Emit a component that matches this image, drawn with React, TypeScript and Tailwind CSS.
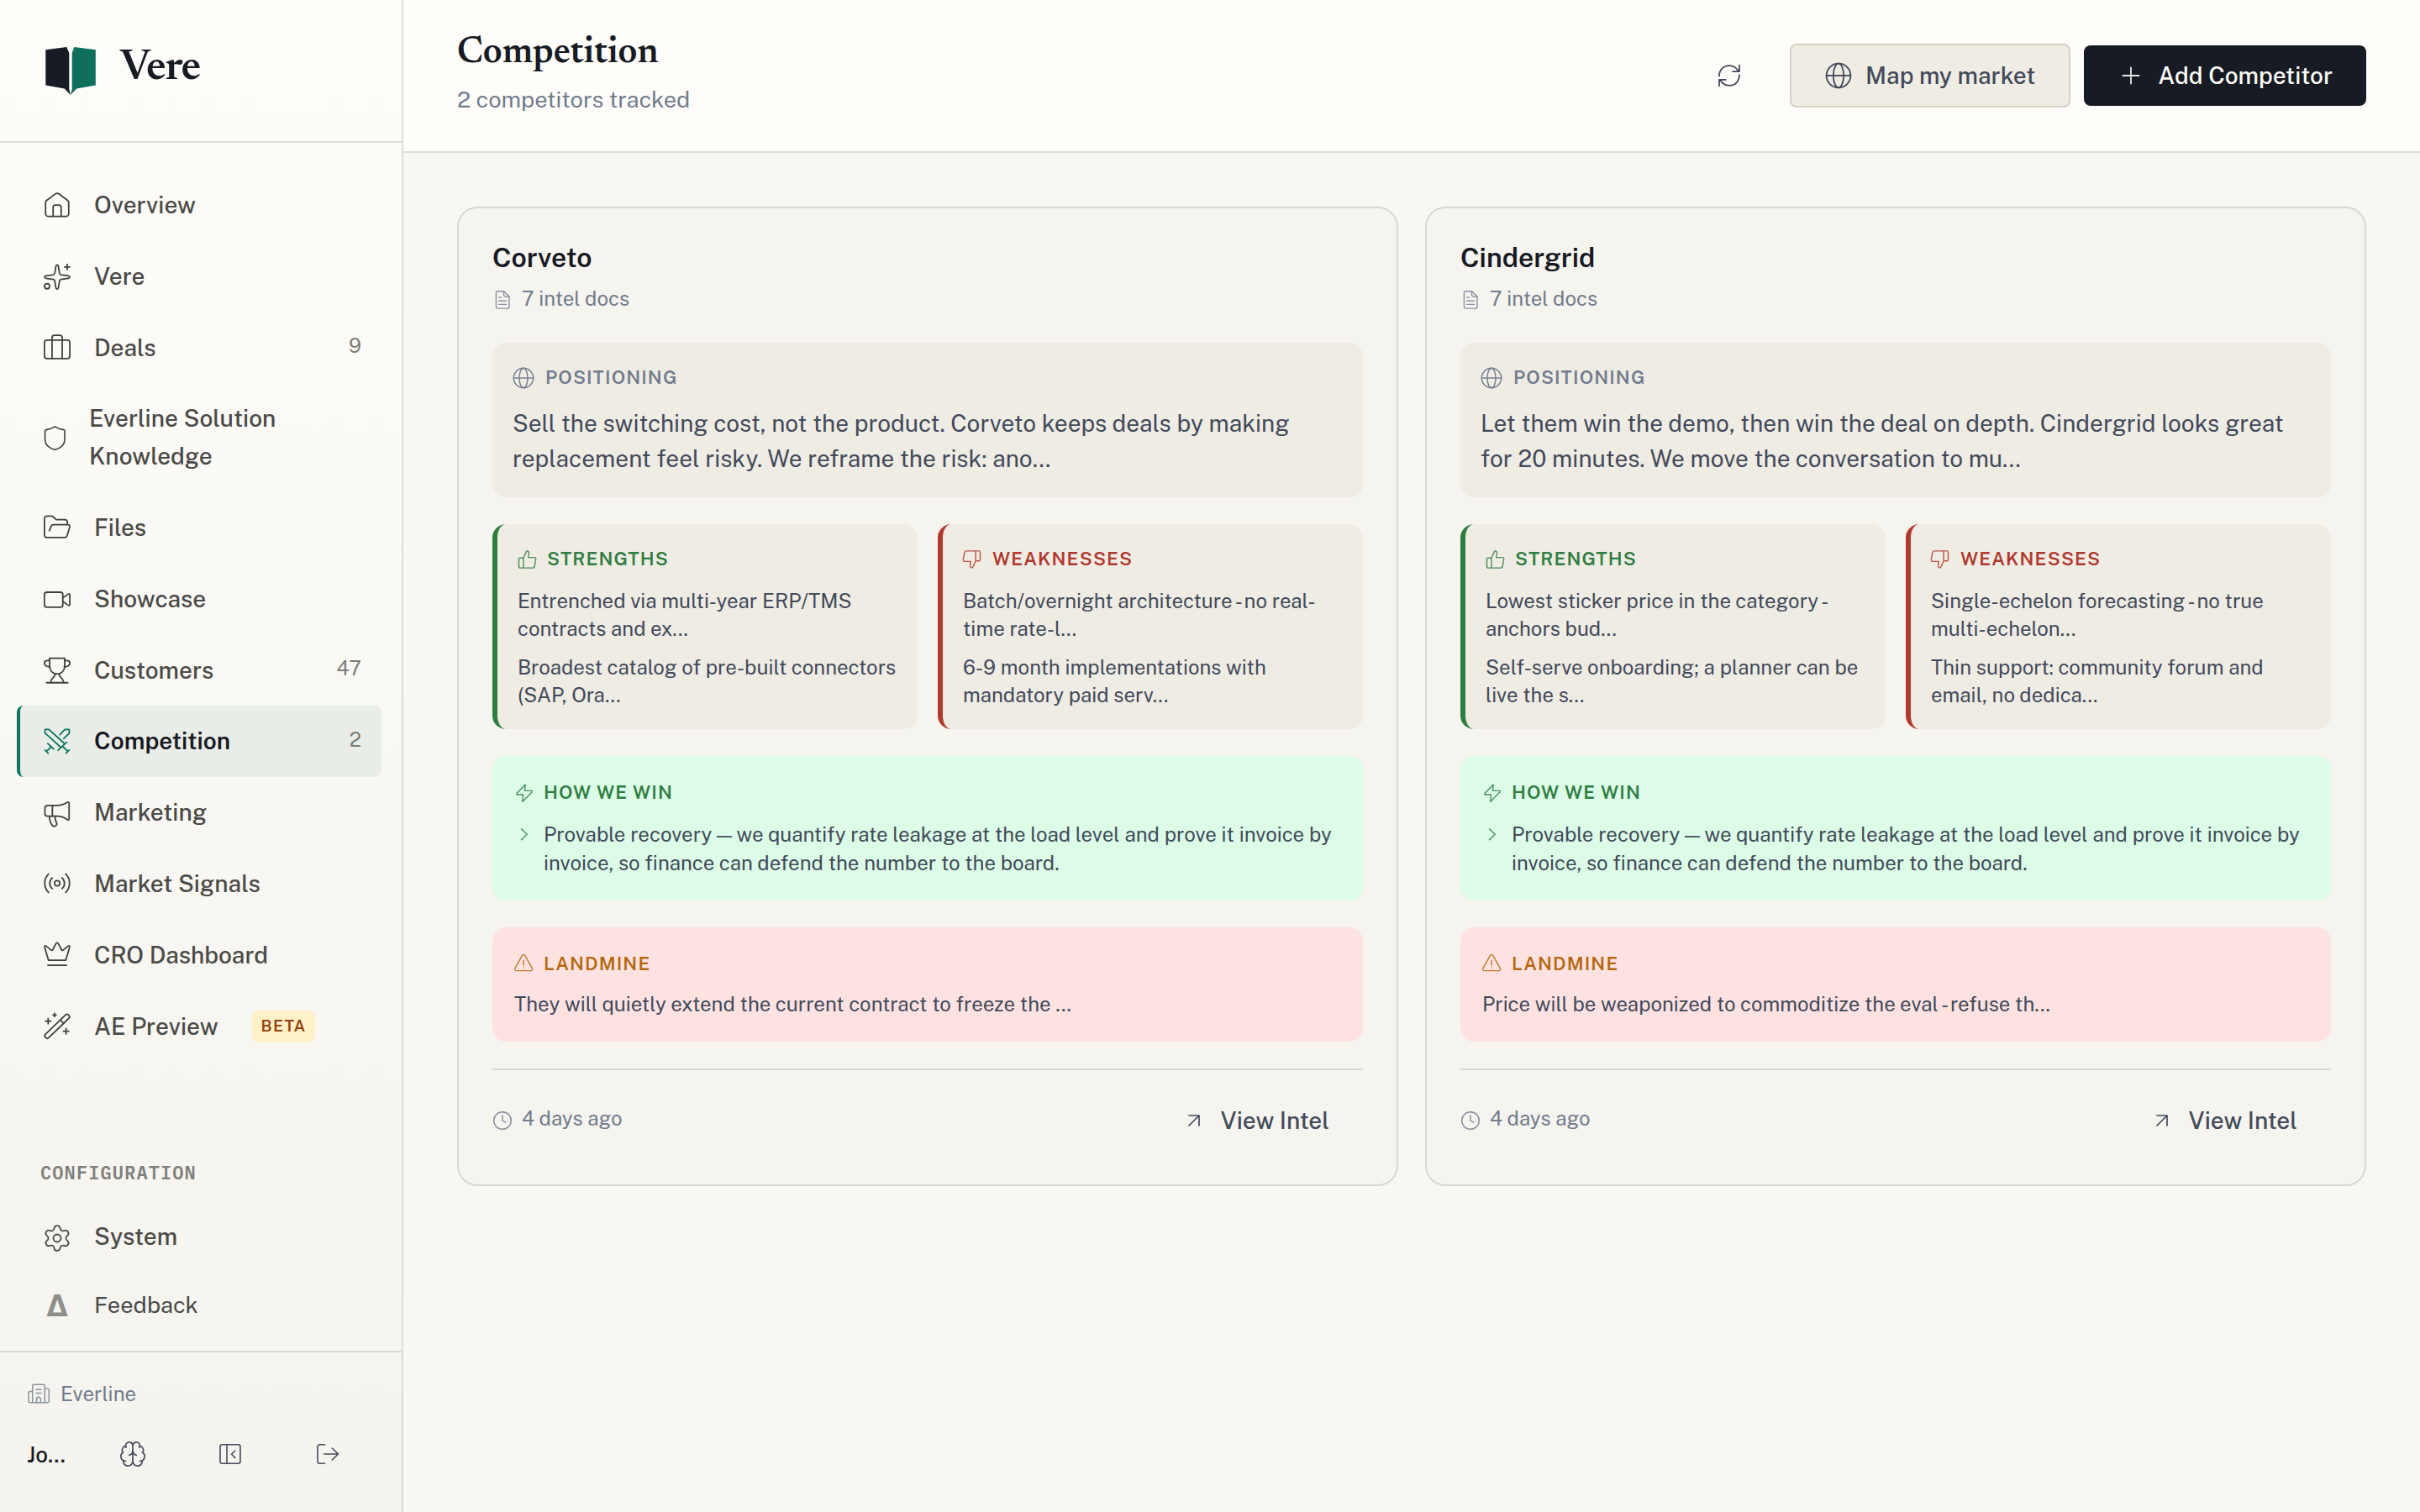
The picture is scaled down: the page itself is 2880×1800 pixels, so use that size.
import React from "react";
import type { ReactNode } from "react";
import { Brain, Settings } from "lucide-react";

/* ---------- icon helpers ---------- */

function Icon18({ children }: { children: ReactNode }) {
  return (
    <svg
      viewBox="0 0 18 18"
      className="h-8 w-8 shrink-0 overflow-visible"
      fill="none"
      stroke="currentColor"
      strokeWidth={1}
      strokeLinecap="round"
      strokeLinejoin="round"
    >
      {children}
    </svg>
  );
}

function Px({ w, h, sw = 1.6, className = "", children }: { w: number; h: number; sw?: number; className?: string; children: ReactNode }) {
  return (
    <svg
      viewBox={`0 0 ${w} ${h}`}
      width={w}
      height={h}
      className={`shrink-0 overflow-visible ${className}`}
      fill="none"
      stroke="currentColor"
      strokeWidth={sw}
      strokeLinecap="round"
      strokeLinejoin="round"
    >
      {children}
    </svg>
  );
}

const HomeIcon = () => (
  <Icon18>
    <path d="M1.25 7.5c0-.7.3-1.2.8-1.6l5.8-4.3c.7-.5 1.6-.5 2.3 0l5.8 4.3c.5.4.8.9.8 1.6v7.2a2 2 0 0 1-2 2H3.25a2 2 0 0 1-2-2z" />
    <path d="M6.3 16.7v-6.1c0-.9.6-1.5 1.5-1.5h2.4c.9 0 1.5.6 1.5 1.5v6.1" />
  </Icon18>
);
const SparkleIcon = () => (
  <Icon18>
    <path d="M8.2 2.1c.2-1 1.4-1 1.6 0l.8 4.9c.1.5.4.8.9.9l5 .7c1.2.2 1.2 1.5 0 1.7l-5 .8c-.5.1-.8.4-.9.9l-.8 4.8c-.2 1-1.4 1-1.6 0l-.8-4.8c-.1-.5-.4-.8-.9-.9l-5-.8c-1.2-.2-1.2-1.5 0-1.7l5-.7c.5-.1.8-.4.9-.9z" />
    <path d="M15.75.9v3.6M13.95 2.7h3.6" />
    <circle cx="2.25" cy="15.6" r="1.7" />
  </Icon18>
);
const DealsIcon = () => (
  <Icon18>
    <rect x=".5" y="3.9" width="17" height="12.3" rx="1.7" />
    <path d="M5.6 16.2V2.2A1.6 1.6 0 0 1 7.2.6h3.6a1.6 1.6 0 0 1 1.6 1.6v14" />
  </Icon18>
);
const ShieldIcon = () => (
  <Px w={26} h={32} sw={1.6}>
    <path d="M13.3 2.9C10 5.2 6.5 6 3 6.6c-.9.2-1.4.8-1.4 1.6v10.2c0 6.6 5.5 10.2 11.7 12.1 6.2-1.9 11.7-5.5 11.7-12.1V8.2c0-.8-.5-1.4-1.4-1.6-3.5-.6-7-1.4-10.3-3.7z" />
  </Px>
);
const FolderIcon = () => (
  <Icon18>
    <path d="M3.8 11.2l1-2.8c.3-.8 1-1.3 1.8-1.3h9.6c.9 0 1.5.8 1.2 1.7l-1.7 5.6c-.2.8-.9 1.3-1.8 1.3H2.2c-.9 0-1.7-.8-1.7-1.7V3.2c0-1.1.8-1.9 1.9-1.9h2.7c.6 0 1 .2 1.4.6l1.3 1.4c.3.3.6.4 1 .4h5.4c.9 0 1.7.8 1.7 1.7v1.7" />
  </Icon18>
);
const VideoIcon = () => (
  <Icon18>
    <rect x=".5" y="4.5" width="12.3" height="10" rx="1.6" />
    <path d="M12.8 8.3l3.7-2.6c.4-.3 1 0 1 .6v6.4c0 .6-.6.9-1 .6l-3.7-2.6" />
  </Icon18>
);
const TrophyIcon = () => (
  <Icon18>
    <path d="M3.9 .9h10.2l-.1 5.7a5 4.9 0 0 1-10 0z" />
    <path d="M4 2.5H2.4C1.2 2.5.5 3.1.5 4.1c0 1.8 1.5 2.6 3.7 2.5M14 2.5h1.6c1.2 0 1.9.6 1.9 1.6 0 1.8-1.5 2.6-3.7 2.5" />
    <path d="M7.6 11.4c.4 2.4-3 2.5-3 5.9M10.4 11.4c-.4 2.4 3 2.5 3 5.9M1.9 17.3h14.2" />
  </Icon18>
);
const SwordsIcon = () => (
  <Icon18>
    <path d="M11.5 12.8L.9 3.2V.8h2.6l10.6 9.6M15.4 9.4l-5.8 5.3M12.6 12.1l3.5 3.3M17.1 14.6L15 16.7" />
    <path d="M10.8 4.3L14.2.8h2.9v2.5l-3.7 3.6M2.7 10.2l4 3.7M5.2 12.3l-3.3 3.1M.9 14.6L3 16.7" />
  </Icon18>
);
const MegaphoneIcon = () => (
  <Icon18>
    <path d="M2.6 3.9h6c3.4 0 5.6-1 7.3-2.2.5-.3 1.1 0 1.1.6v10.6c0 .6-.6.9-1.1.6-1.7-1.4-3.9-2.4-7.3-2.4h-6A1.8 1.8 0 0 1 .8 9.3V5.7c0-1 .8-1.8 1.8-1.8z" />
    <path d="M5.8 3.9v7.2M3.8 11.1c.1 2.8.8 4.8 2 6.1.6.7 1.5.8 2.2.3.8-.6 1-1.5.5-2.3-.7-1.2-1-2.3-1-4.1" />
  </Icon18>
);
const SignalIcon = () => (
  <Icon18>
    <circle cx="9" cy="8.7" r="1.75" />
    <path d="M5.7 5.1a4.8 4.8 0 0 0 0 7.2M12.3 5.1a4.8 4.8 0 0 1 0 7.2M3.3 2.5a8.7 8.7 0 0 0 0 12.4M14.7 2.5a8.7 8.7 0 0 1 0 12.4" />
  </Icon18>
);
const CrownIcon = () => (
  <Icon18>
    <path d="M3.2 12.4L.6 3.7c-.2-.8.5-1.2 1.1-.7l3.3 2.7c.4.3.8.2 1-.2L8.3 1.2c.3-.6 1.1-.6 1.4 0L12 5.5c.2.4.6.5 1 .2l3.3-2.7c.6-.5 1.3-.1 1.1.7l-2.6 8.7zM2.8 15.8h12.4" />
  </Icon18>
);
const WandIcon = () => (
  <Icon18>
    <g transform="translate(9 8.9) rotate(-44)">
      <rect x="-10.7" y="-1.6" width="21.4" height="3.2" rx="1.3" />
      <path d="M4.5-1.6v3.2" />
    </g>
    <path d="M7.3.2v2.2M6.2 1.3h2.2M3 3.6v3.6M1.2 5.4h3.6M15 10.4V14M13.2 12.2h3.6" />
  </Icon18>
);
const Globe = ({ size, sw }: { size: number; sw: number }) => (
  <svg viewBox="0 0 26 26" width={size} height={size} className="shrink-0" fill="none" stroke="currentColor" strokeWidth={sw}>
    <circle cx="13" cy="13" r="11.7" />
    <ellipse cx="13" cy="13" rx="5" ry="11.7" />
    <path d="M1.3 13h23.4" />
  </svg>
);
const FileIcon = () => (
  <Px w={24} h={24} sw={1.4} className="opacity-80">
    <path d="M13.6 1.7H6.6a2.2 2.2 0 0 0-2.2 2.2v16a2.2 2.2 0 0 0 2.2 2.2h11.2a2.2 2.2 0 0 0 2.2-2.2V8z" />
    <path d="M13.6 1.7V6.6A1.4 1.4 0 0 0 15 8h5M7.7 9h2.6M7.7 13.2h8.8M7.7 17.4h8.8" />
  </Px>
);
const ClockIcon = () => (
  <Px w={24} h={24} sw={1.4} className="opacity-85">
    <circle cx="12" cy="12" r="10.3" />
    <path d="M12 5.5V12l4 2.5" />
  </Px>
);
const ThumbUp = ({ flip = false }: { flip?: boolean }) => (
  <Px w={22} h={22} sw={1.4} className={flip ? "rotate-180 opacity-85" : "opacity-85"}>
    <path d="M6.9 9.2L10.3 1.9c.5-1 1.9-1.2 2.7-.3.6.7.7 1.4.5 2.3l-.9 4.7h7.2c1.2 0 2.1 1 1.9 2.2l-1.6 8.6c-.2 1-.9 1.7-2 1.7H3c-.9 0-1.5-.6-1.5-1.5v-8.9c0-.9.6-1.5 1.5-1.5zM6.9 9.2v11.9" />
  </Px>
);
const ZapIcon = () => (
  <Px w={22} h={22} sw={1.4} className="opacity-85">
    <path d="M13.2.9L2.9 11.6c-.5.6-.2 1.4.6 1.4h7.2l-.9 8.4L21.1 9.8c.5-.6.2-1.4-.6-1.4h-8.2z" />
  </Px>
);
const WarnIcon = () => (
  <Px w={22} h={22} sw={1.4} className="opacity-85">
    <path d="M9.4.6c.8-1.3 2.6-1.3 3.4 0l8.5 15.1c.8 1.3-.1 2.9-1.7 2.9H2.6C1 18.6.1 17 .9 15.7zM11.1 6.2v6M11.1 15v.3" />
  </Px>
);
const ChevronIcon = () => (
  <Px w={22} h={22} sw={1.4} className="opacity-85">
    <path d="M8.5 4.7l6.7 6.5-6.7 6.5" />
  </Px>
);

/* ---------- sidebar ---------- */

type NavEntry = { label: string; icon: ReactNode; count?: string; active?: boolean; beta?: boolean };

const NAV: NavEntry[] = [
  { label: "Overview", icon: <HomeIcon /> },
  { label: "Vere", icon: <SparkleIcon /> },
  { label: "Deals", icon: <DealsIcon />, count: "9" },
  { label: "Everline Solution Knowledge", icon: <ShieldIcon /> },
  { label: "Files", icon: <FolderIcon /> },
  { label: "Showcase", icon: <VideoIcon /> },
  { label: "Customers", icon: <TrophyIcon />, count: "47" },
  { label: "Competition", icon: <SwordsIcon />, count: "2", active: true },
  { label: "Marketing", icon: <MegaphoneIcon /> },
  { label: "Market Signals", icon: <SignalIcon /> },
  { label: "CRO Dashboard", icon: <CrownIcon /> },
  { label: "AE Preview", icon: <WandIcon />, beta: true },
];

function NavItem({ item }: { item: NavEntry }) {
  return (
    <a
      className={`flex items-center gap-7 rounded-lg border-l-4 py-5 pr-6 pl-7 text-[28px] leading-[44.8px] ${
        item.active ? "border-[#0d7560] bg-[#e8ede7] font-semibold text-[#171923]" : "border-transparent font-medium text-[#4a4a47]"
      }`}
    >
      <span className={item.active ? "text-[#0d7560]" : "text-[#3f3f3d]"}>{item.icon}</span>
      <span>{item.label}</span>
      {item.beta && (
        <span className="ml-3 flex h-[38px] items-center rounded-lg bg-[#fef0c7] px-[11px] text-[19.2px] leading-none font-semibold tracking-[1.1px] text-[#92400e]">
          BETA
        </span>
      )}
      {item.count && <span className="ml-auto pb-1.5 text-[24px] leading-[38.4px] font-normal text-[#7c7c79]">{item.count}</span>}
    </a>
  );
}

function Sidebar() {
  return (
    <aside className="flex w-[480px] shrink-0 flex-col border-r-2 border-[#dcdbd8] bg-linear-to-b from-[#fefdf9] to-[#f4f3ee]">
      <div className="flex h-[170px] shrink-0 items-center gap-[29px] border-b-2 border-[#dcdcda] pl-[54px]">
        <svg viewBox="0 0 60 57" width={60} height={57} className="shrink-0">
          <path d="M.3 3.3L25.3 0l3 7v43L30 57l-7.3-7.4L.3 45.6z" fill="#171b23" />
          <path d="M59.8 3.3L34.3 0l-2.6 7v43L30 57l7.3-7.4 22.5-4z" fill="#0f6f5b" />
        </svg>
        <span className="pb-1 font-['Newsreader','Liberation_Serif',serif] text-[52px] leading-none font-semibold tracking-[-1.3px] text-[#171b23]">Vere</span>
      </div>

      <nav className="flex flex-col pt-8 pr-6 pl-5">
        {NAV.map((n) => (
          <NavItem key={n.label} item={n} />
        ))}
      </nav>

      <div className="mt-auto flex flex-col pr-6 pb-3 pl-5">
        <div className="pb-[22px] pl-7 font-['IBM_Plex_Mono','Liberation_Mono',monospace] text-[22px] leading-[30px] font-semibold tracking-[1.1px] text-[#7f7f7a]">
          CONFIGURATION
        </div>
        <a className="flex h-[78px] items-center gap-7 pl-8 text-[28px] font-medium text-[#4a4a47]">
          <Settings size={36} strokeWidth={1.2} className="-m-0.5 translate-y-0.5" />
          System
        </a>
        <a className="flex h-[85px] items-center gap-7 pl-8 text-[27.2px] text-[#4a4a47]">
          <span className="w-8 text-center font-['Inter',sans-serif] text-[36px] font-bold text-[#8e8e8a]">Δ</span>
          Feedback
        </a>
      </div>

      <div className="flex h-[192px] shrink-0 flex-col border-t-2 border-[#dad9d5] px-8 pt-[29px]">
        <div className="flex h-[39px] items-center gap-[13px] pl-px text-[24px] text-[#717c8d]">
          <Px w={26} h={24} sw={1.5} className="opacity-80">
            <path d="M5.7 22.7V3.3A2 2 0 0 1 7.7 1.3h10.6a2 2 0 0 1 2 2v19.4M5.7 9.5H3a2 2 0 0 0-2 2v9.2a2 2 0 0 0 2 2h20.3a2 2 0 0 0 2-2V8.3a2 2 0 0 0-2-2h-3" />
            <path d="M10 7.3h6M10 11.5h6M10.5 22.7v-4a2.5 2.5 0 0 1 5 0v4" />
          </Px>
          Everline
        </div>
        <div className="mt-[11px] flex h-[84px] items-center text-[#454c5c]">
          <span className="w-[68px] shrink-0 text-[26px] font-medium text-[#171923]">Jo...</span>
          <span className="flex w-[116px] shrink-0 justify-center">
            <Brain size={34} strokeWidth={1.2} />
          </span>
          <span className="flex w-[116px] shrink-0 justify-center">
            <Px w={26} h={26}>
              <rect x="1" y="1.8" width="24" height="22.5" rx="2.5" />
              <path d="M9 1.8v22.5M18.8 9L14.5 13.2l4.3 4.2" />
            </Px>
          </span>
          <span className="flex w-[116px] shrink-0 justify-center">
            <Px w={26} h={26}>
              <path d="M9.6 1.8H3.5A2.5 2.5 0 0 0 1 4.3v17.5a2.5 2.5 0 0 0 2.5 2.5h6.1M8.7 13h16.8M18.2 6l7.3 7-7.3 7" />
            </Px>
          </span>
        </div>
      </div>
    </aside>
  );
}

/* ---------- competitor cards ---------- */

type Competitor = { name: string; positioning: string; strengths: string[]; weaknesses: string[]; landmine: string };

const COMPETITORS: Competitor[] = [
  {
    name: "Corveto",
    positioning: "Sell the switching cost, not the product. Corveto keeps deals by making replacement feel risky. We reframe the risk: ano...",
    strengths: ["Entrenched via multi-year ERP/TMS contracts and ex...", "Broadest catalog of pre-built connectors (SAP, Ora..."],
    weaknesses: ["Batch/overnight architecture - no real-time rate-l...", "6-9 month implementations with mandatory paid serv..."],
    landmine: "They will quietly extend the current contract to freeze the ...",
  },
  {
    name: "Cindergrid",
    positioning: "Let them win the demo, then win the deal on depth. Cindergrid looks great for 20 minutes. We move the conversation to mu...",
    strengths: ["Lowest sticker price in the category - anchors bud...", "Self-serve onboarding; a planner can be live the s..."],
    weaknesses: ["Single-echelon forecasting - no true multi-echelon...", "Thin support: community forum and email, no dedica..."],
    landmine: "Price will be weaponized to commoditize the eval - refuse th...",
  },
];

function Label({ icon, color, children }: { icon: ReactNode; color: string; children: ReactNode }) {
  return (
    <div className={`flex items-center gap-[13px] text-[22px] leading-[36px] font-semibold tracking-[1.1px] ${color}`}>
      {icon}
      <span className="-translate-y-px">{children}</span>
    </div>
  );
}

function Points({ items }: { items: string[] }) {
  return (
    <div className="mt-[15px] flex flex-col gap-[13px] text-[24px] leading-[33px]">
      {items.map((t) => (
        <p key={t}>{t}</p>
      ))}
    </div>
  );
}

function Card({ c }: { c: Competitor }) {
  return (
    <article className="flex h-[1166px] flex-col rounded-3xl border-2 border-[#d8d7d2] bg-[#f5f4ef] p-10 text-[#424a5a]">
      <h2 className="text-[32px] leading-[37px] font-semibold text-[#171923]">{c.name}</h2>
      <div className="mt-2.5 flex h-10 items-center gap-[11px] text-[24px] text-[#717c8d]">
        <span className="pt-1">
          <FileIcon />
        </span>
        <span className="pb-px">7 intel docs</span>
      </div>

      <section className="mt-[33px] h-[184px] rounded-2xl bg-[#efece4] p-6">
        <Label icon={<Globe size={26} sw={1.4} />} color="text-[#717c8d]">
          POSITIONING
        </Label>
        <p className="mt-[15px] text-[28px] leading-[42px]">{c.positioning}</p>
      </section>

      <div className="mt-8 grid h-[244px] grid-cols-2 gap-6">
        <section className="rounded-2xl border-l-6 border-[#2e7d42] bg-[#efece4] p-6">
          <Label icon={<ThumbUp />} color="text-[#2e7d42]">
            STRENGTHS
          </Label>
          <Points items={c.strengths} />
        </section>
        <section className="rounded-2xl border-l-6 border-[#b0382f] bg-[#efece4] p-6">
          <Label icon={<ThumbUp flip />} color="text-[#b0382f]">
            WEAKNESSES
          </Label>
          <Points items={c.weaknesses} />
        </section>
      </div>

      <section className="mt-8 h-[172px] rounded-2xl bg-[#dcfce7] p-[26px]">
        <Label icon={<ZapIcon />} color="text-[#2e7d42]">
          HOW WE WIN
        </Label>
        <div className="mt-[15px] flex gap-[13px]">
          <span className="pt-[5px] text-[#2e7d42]">
            <ChevronIcon />
          </span>
          <p className="text-[24px] leading-[33.6px]">
            Provable recovery — we quantify rate leakage at the load level and prove it invoice by invoice, so finance can defend the number to the board.
          </p>
        </div>
      </section>

      <section className="mt-8 h-[136px] rounded-2xl bg-[#fee2e2] p-[26px]">
        <Label icon={<WarnIcon />} color="text-[#b4690e]">
          LANDMINE
        </Label>
        <p className="mt-[13px] text-[24px] leading-[33.6px]">{c.landmine}</p>
      </section>

      <footer className="mt-8 flex items-center justify-between border-t-2 border-[#d8d7d2] pt-6">
        <div className="flex items-center gap-[11px] text-[24px] text-[#717c8d]">
          <ClockIcon />
          <span className="pb-1.5">4 days ago</span>
        </div>
        <button className="flex h-[72px] items-center gap-4 px-10 text-[28px] font-medium">
          <span className="flex w-8 justify-center">
            <Px w={14} h={14} sw={1.7}>
              <path d="M1 13L13 1M1 1h12v12" />
            </Px>
          </span>
          View Intel
        </button>
      </footer>
    </article>
  );
}

export default function App() {
  return (
    <div className="flex h-[1800px] w-[2880px] overflow-hidden bg-[#f8f7f3] font-['Public_Sans','Inter',sans-serif]">
      <Sidebar />
      <main className="flex min-w-0 flex-1 flex-col">
        <header className="flex h-[182px] items-center border-b-2 border-[#dddcda] bg-[#fefdf9] px-16">
          <div className="flex flex-col">
            <h1 className="-mt-1 pb-1 font-['Newsreader','Liberation_Serif',serif] text-[44px] leading-[56px] font-semibold text-[#171b23]">
              Competition
            </h1>
            <p className="text-[27.2px] leading-[44.8px] text-[#717c8d]">2 competitors tracked</p>
          </div>
          <div className="ml-auto flex items-center gap-4 text-[28px] font-medium">
            <button className="mr-5 flex h-[72px] w-[72px] items-center justify-center text-[#424a5a]">
              <Px w={26} h={26} sw={1.8}>
                <path d="M1 13.5C1 6.5 6 1.2 13 1.2c5 0 8.5 2.5 11 6.8M25 .7v7.5h-8" />
                <path d="M25 12.5c0 7-5 12.3-12 12.3-5 0-8.5-2.5-11-6.8M1 25.3v-7.5h8" />
              </Px>
            </button>
            <button className="flex h-[76px] items-center gap-4 rounded-lg border-2 border-[#d3d1c8] bg-[#efece4] px-10 text-[#424a5a]">
              <Globe size={32} sw={1.5} />
              Map my market
            </button>
            <button className="flex h-[72px] items-center gap-4 rounded-lg bg-[#171b23] px-10 text-[#fefdf9]">
              <span className="flex w-8 justify-center">
                <Px w={20} h={20} sw={1.8} className="opacity-90">
                  <path d="M10 .5v19M.5 10h19" />
                </Px>
              </span>
              Add Competitor
            </button>
          </div>
        </header>
        <div className="grid grid-cols-2 gap-8 px-16 pt-16">
          {COMPETITORS.map((c) => (
            <Card key={c.name} c={c} />
          ))}
        </div>
      </main>
    </div>
  );
}
